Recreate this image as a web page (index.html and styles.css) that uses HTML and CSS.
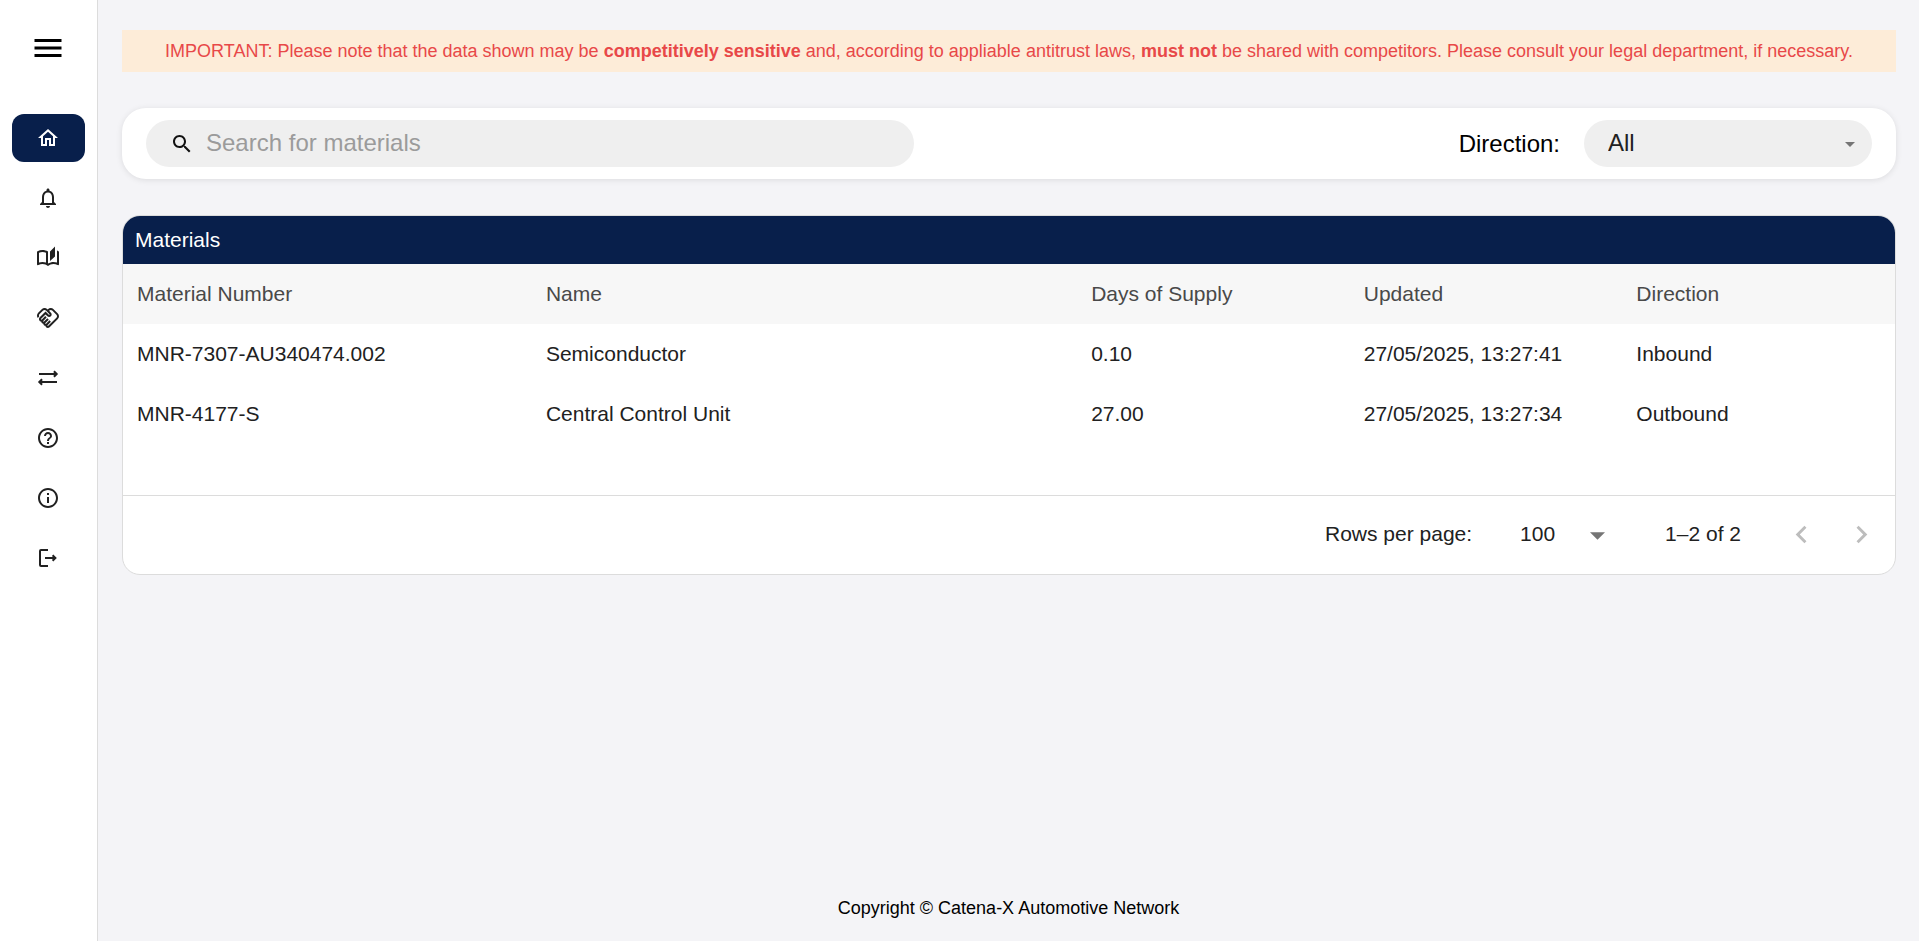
FILE: index.html
```html
<!DOCTYPE html>
<html lang="en">
<head>
<meta charset="utf-8">
<meta name="viewport" content="width=device-width, initial-scale=1">
<title>Materials</title>
<link rel="stylesheet" href="styles.css">
</head>
<body>
<div class="app">
  <aside class="sidebar">
    <button class="menu-button" type="button" aria-label="Toggle menu">
      <svg class="icon icon-menu" viewBox="0 0 24 24"><path d="M3 18h18v-2H3v2zm0-5h18v-2H3v2zm0-7v2h18V6H3z"/></svg>
    </button>
    <nav class="nav">
      <a class="nav-item active" href="#" aria-label="Home">
        <svg class="icon" viewBox="0 0 24 24"><path d="M12 5.69l5 4.5V18h-2v-6H9v6H7v-7.81l5-4.5M12 3L2 12h3v8h6v-6h2v6h6v-8h3L12 3z"/></svg>
      </a>
      <a class="nav-item" href="#" aria-label="Notifications">
        <svg class="icon" viewBox="0 0 24 24"><path d="M12 22c1.1 0 2-.9 2-2h-4c0 1.1.9 2 2 2zm6-6v-5c0-3.07-1.63-5.64-4.5-6.32V4c0-.83-.67-1.5-1.5-1.5s-1.5.67-1.5 1.5v.68C7.64 5.36 6 7.92 6 11v5l-2 2v1h16v-1l-2-2zm-2 1H8v-6c0-2.48 1.51-4.5 4-4.5s4 2.02 4 4.5v6z"/></svg>
      </a>
      <a class="nav-item" href="#" aria-label="Catalog">
        <svg class="icon" viewBox="0 0 24 24"><path d="M22.47 5.2c-.47-.24-.96-.44-1.47-.61v12.03c-1.14-.41-2.31-.62-3.5-.62-1.9 0-3.78.54-5.5 1.58V5.48C10.38 4.55 8.51 4 6.5 4c-1.79 0-3.48.44-4.97 1.2-.33.16-.53.51-.53.88v12.08c0 .58.47.99 1 .99.16 0 .32-.04.48-.12C3.69 18.4 5.05 18 6.5 18c2.07 0 3.98.82 5.5 2 1.52-1.18 3.43-2 5.5-2 1.45 0 2.81.4 4.02 1.04.16.08.32.12.48.12.52 0 1-.41 1-.99V6.08c0-.37-.2-.72-.53-.88zM10 16.62C8.86 16.21 7.69 16 6.5 16s-2.36.21-3.5.62V6.71C4.11 6.24 5.28 6 6.5 6c1.2 0 2.39.25 3.5.72v9.9zM19 .5l-5 5V15l5-4.5V.5z"/></svg>
      </a>
      <a class="nav-item" href="#" aria-label="Negotiations">
        <svg class="icon" viewBox="0 0 24 24"><path d="M12.22 19.85c-.18.18-.5.21-.71 0-.18-.18-.21-.5 0-.71l3.39-3.39-1.41-1.41-3.39 3.39c-.19.2-.51.19-.71 0-.21-.21-.18-.53 0-.71l3.39-3.39-1.41-1.41-3.39 3.39c-.18.18-.5.21-.71 0-.19-.19-.19-.51 0-.71l3.39-3.39-1.42-1.41-3.39 3.39c-.18.18-.5.21-.71 0-.19-.2-.19-.51 0-.71L9.52 8.4l1.87 1.86c.95.95 2.59.94 3.54 0 .98-.98.98-2.56 0-3.54l-1.86-1.86.28-.28c.78-.78 2.05-.78 2.83 0l4.24 4.24c.78.78.78 2.05 0 2.83l-8.2 8.2zm9.61-6.78c1.56-1.56 1.56-4.09 0-5.66l-4.24-4.24c-1.56-1.56-4.09-1.56-5.66 0l-.28.28-.28-.28c-1.56-1.56-4.09-1.56-5.66 0L2.17 6.71c-1.42 1.42-1.55 3.63-.4 5.19l1.45-1.45c-.39-.75-.26-1.7.37-2.33l3.54-3.54c.78-.78 2.05-.78 2.83 0l3.56 3.56c.18.18.21.5 0 .71-.21.21-.53.18-.71 0L9.52 5.57l-5.8 5.79c-.98.97-.98 2.56 0 3.54.39.39.89.63 1.42.7.07.52.3 1.02.7 1.42.4.4.9.63 1.42.7.07.52.3 1.02.7 1.42.4.4.9.63 1.42.7.07.54.31 1.03.7 1.42.47.47 1.1.73 1.77.73s1.3-.26 1.77-.73l8.24-8.23z"/></svg>
      </a>
      <a class="nav-item" href="#" aria-label="Transfers">
        <svg class="icon icon-line" viewBox="0 0 24 24"><path d="M3 8h18M17.900 5.200l2.800 2.800-2.800 2.800M21 16H3M6.100 13.200L3.300 16l2.800 2.800"/></svg>
      </a>
      <a class="nav-item" href="#" aria-label="Help">
        <svg class="icon" viewBox="0 0 24 24"><path d="M11 18h2v-2h-2v2zm1-16C6.480 2 2 6.480 2 12s4.480 10 10 10 10-4.480 10-10S17.520 2 12 2zm0 18c-4.410 0-8-3.590-8-8s3.590-8 8-8 8 3.590 8 8-3.590 8-8 8zm0-14c-2.210 0-4 1.790-4 4h2c0-1.100.9-2 2-2s2 .9 2 2c0 2-3 1.750-3 5h2c0-2.250 3-2.500 3-5 0-2.210-1.790-4-4-4z"/></svg>
      </a>
      <a class="nav-item" href="#" aria-label="About">
        <svg class="icon" viewBox="0 0 24 24"><path d="M11 7h2v2h-2zm0 4h2v6h-2zm1-9C6.480 2 2 6.480 2 12s4.480 10 10 10 10-4.480 10-10S17.520 2 12 2zm0 18c-4.410 0-8-3.590-8-8s3.590-8 8-8 8 3.590 8 8-3.590 8-8 8z"/></svg>
      </a>
      <a class="nav-item" href="#" aria-label="Log out">
        <svg class="icon icon-line" viewBox="0 0 24 24"><path d="M12 4H5Q4 4 4 5v14q0 1 1 1h7M9 12h11M16.600 9.200l2.800 2.800-2.800 2.800"/></svg>
      </a>
    </nav>
  </aside>

  <div class="page">
    <main class="content">
      <p class="alert">IMPORTANT: Please note that the data shown may be <b>competitively sensitive</b> and, according to appliable antitrust laws, <b>must not</b> be shared with competitors. Please consult your legal department, if necessary.</p>

      <form class="filters">
        <label class="search">
          <svg class="icon" viewBox="0 0 24 24"><path d="M15.500 14h-.79l-.28-.27C15.410 12.590 16 11.110 16 9.500 16 5.910 13.090 3 9.500 3S3 5.910 3 9.500 5.910 16 9.500 16c1.610 0 3.090-.59 4.230-1.570l.27.28v.79l5 4.990L20.490 19l-4.990-5zm-6 0C7.010 14 5 11.990 5 9.500S7.010 5 9.500 5 14 7.010 14 9.500 11.990 14 9.500 14z"/></svg>
          <input class="search-input" type="text" placeholder="Search for materials" aria-label="Search for materials">
        </label>
        <div class="direction">
          <label for="direction">Direction:</label>
          <div class="select">
            <select id="direction" class="direction-select"><option>All</option><option>Inbound</option><option>Outbound</option></select>
            <svg class="arrow arrow-small" viewBox="0 0 10 5"><path d="M0 0h10L5 5z"/></svg>
          </div>
        </div>
      </form>

      <section class="card">
        <h2 class="card-title">Materials</h2>
        <table class="materials">
          <colgroup><col class="col-number"><col class="col-name"><col class="col-short"><col class="col-short"><col class="col-short"></colgroup>
          <thead>
            <tr><th>Material Number</th><th>Name</th><th>Days of Supply</th><th>Updated</th><th>Direction</th></tr>
          </thead>
          <tbody>
            <tr><td>MNR-7307-AU340474.002</td><td>Semiconductor</td><td>0.10</td><td>27/05/2025, 13:27:41</td><td>Inbound</td></tr>
            <tr><td>MNR-4177-S</td><td>Central Control Unit</td><td>27.00</td><td>27/05/2025, 13:27:34</td><td>Outbound</td></tr>
          </tbody>
        </table>
        <div class="pagination">
          <label for="rows">Rows per page:</label>
          <div class="select">
            <select id="rows" class="rows-select"><option>100</option><option>50</option><option>25</option></select>
            <svg class="arrow arrow-large" viewBox="0 0 10 5"><path d="M0 0h10L5 5z"/></svg>
          </div>
          <span class="range">1–2 of 2</span>
          <div class="pager">
            <button class="pager-button" type="button" disabled aria-label="Previous page"><svg class="icon icon-pager" viewBox="0 0 24 24"><path d="M15.410 16.590L10.830 12l4.580-4.590L14 6l-6 6 6 6z"/></svg></button>
            <button class="pager-button" type="button" disabled aria-label="Next page"><svg class="icon icon-pager" viewBox="0 0 24 24"><path d="M8.590 16.590L13.170 12 8.590 7.410 10 6l6 6-6 6z"/></svg></button>
          </div>
        </div>
      </section>
    </main>
    <footer class="footer">Copyright © Catena-X Automotive Network</footer>
  </div>
</div>
</body>
</html>
```

FILE: styles.css
```css
* {
  box-sizing: border-box;
}

body {
  margin: 0;
  background: #f4f4f7;
  color: #000;
  font-family: "Liberation Sans", Arial, sans-serif;
  font-size: 18px;
}

button,
input,
select {
  margin: 0;
  padding: 0;
  border: 0;
  background: none;
  color: inherit;
  font: inherit;
  appearance: none;
}

.app {
  display: flex;
  min-height: 100vh;
}

.icon {
  display: block;
  flex: none;
  width: 24px;
  height: 24px;
  fill: currentColor;
}

.icon-line {
  fill: none;
  stroke: currentColor;
  stroke-width: 2;
}

.icon-menu {
  width: 36px;
  height: 36px;
}

.icon-pager {
  width: 35px;
  height: 35px;
}

/* Sidebar */

.sidebar {
  display: flex;
  flex: none;
  flex-direction: column;
  gap: 36px;
  width: 98px;
  padding: 18px 12px;
  border-right: 1px solid #dcdcdc;
  background: #fff;
}

.menu-button {
  align-self: flex-start;
  padding: 12px 18px;
  color: #000;
}

.nav {
  display: flex;
  flex-direction: column;
  gap: 12px;
}

.nav-item {
  display: flex;
  align-items: center;
  height: 48px;
  padding: 0 24px;
  border-radius: 12px;
  color: #212121;
}

.nav-item.active {
  background: #081f4b;
  color: #fff;
}

/* Page */

.page {
  display: flex;
  flex: 1;
  flex-direction: column;
  min-width: 0;
}

.content {
  display: flex;
  flex: 1;
  flex-direction: column;
  gap: 36px;
  padding: 30px 23px 24px 24px;
}

.alert {
  margin: 0;
  padding: 8px 12px;
  background: #fdecd8;
  color: #e84848;
  line-height: 26px;
  text-align: center;
}

.filters {
  display: flex;
  align-items: center;
  justify-content: space-between;
  gap: 24px;
  padding: 12px 24px;
  border-radius: 24px;
  background: #fff;
  box-shadow: 0 1px 6px rgba(0, 0, 0, 0.1);
  font-size: 24px;
}

.search {
  display: flex;
  align-items: center;
  gap: 12px;
  width: 768px;
  padding: 0 24px;
  border-radius: 24px;
  background: #efefef;
  color: #111;
}

.search-input {
  flex: 1;
  min-width: 0;
  height: 47px;
  padding-bottom: 2px;
}

.search-input::placeholder {
  color: #9b9b9b;
  opacity: 1;
}

.direction {
  display: flex;
  align-items: center;
  gap: 24px;
}

.select {
  position: relative;
}

.direction-select {
  width: 288px;
  height: 47px;
  padding: 0 24px 2px;
  border-radius: 24px;
  background: #efefef;
  color: #212121;
}

.arrow {
  position: absolute;
  top: 50%;
  fill: #757575;
  pointer-events: none;
}

.arrow-small {
  right: 17px;
  width: 10px;
  height: 5px;
  margin-top: -2px;
}

.arrow-large {
  right: 0;
  width: 15px;
  height: 8px;
  margin-top: -2px;
}

/* Materials table */

.card {
  overflow: hidden;
  border: 1px solid #dcdcdc;
  border-radius: 18px;
  background: #fff;
  color: #212121;
  font-size: 21px;
}

.card-title {
  margin: 0;
  padding: 0 12px;
  background: #081f4b;
  color: #fff;
  font-size: 21px;
  font-weight: 400;
  line-height: 48px;
}

.materials {
  width: 100%;
  margin-bottom: 51px;
  border-spacing: 0;
  table-layout: fixed;
}

.col-number {
  width: 300px;
}

.col-name {
  width: 400px;
}

.col-short {
  width: 200px;
}

.materials th,
.materials td {
  height: 60px;
  padding: 0 14px;
  font-weight: 400;
  text-align: left;
}

.materials th {
  background: #f7f7f7;
  color: #494949;
}

.pagination {
  display: flex;
  align-items: center;
  justify-content: flex-end;
  height: 79px;
  padding: 0 4px 2px 0;
  border-top: 1px solid #dcdcdc;
}

.pagination .select {
  margin: 0 60px 0 48px;
}

.rows-select {
  width: 85px;
  height: 36px;
  padding-bottom: 2px;
}

.range {
  margin-right: 30px;
}

.pager {
  display: flex;
}

.pager-button {
  display: flex;
  align-items: center;
  justify-content: center;
  width: 60px;
  height: 60px;
  color: #bdbdbd;
}

.footer {
  padding: 20px 24px;
  line-height: 26px;
  text-align: center;
}
```
